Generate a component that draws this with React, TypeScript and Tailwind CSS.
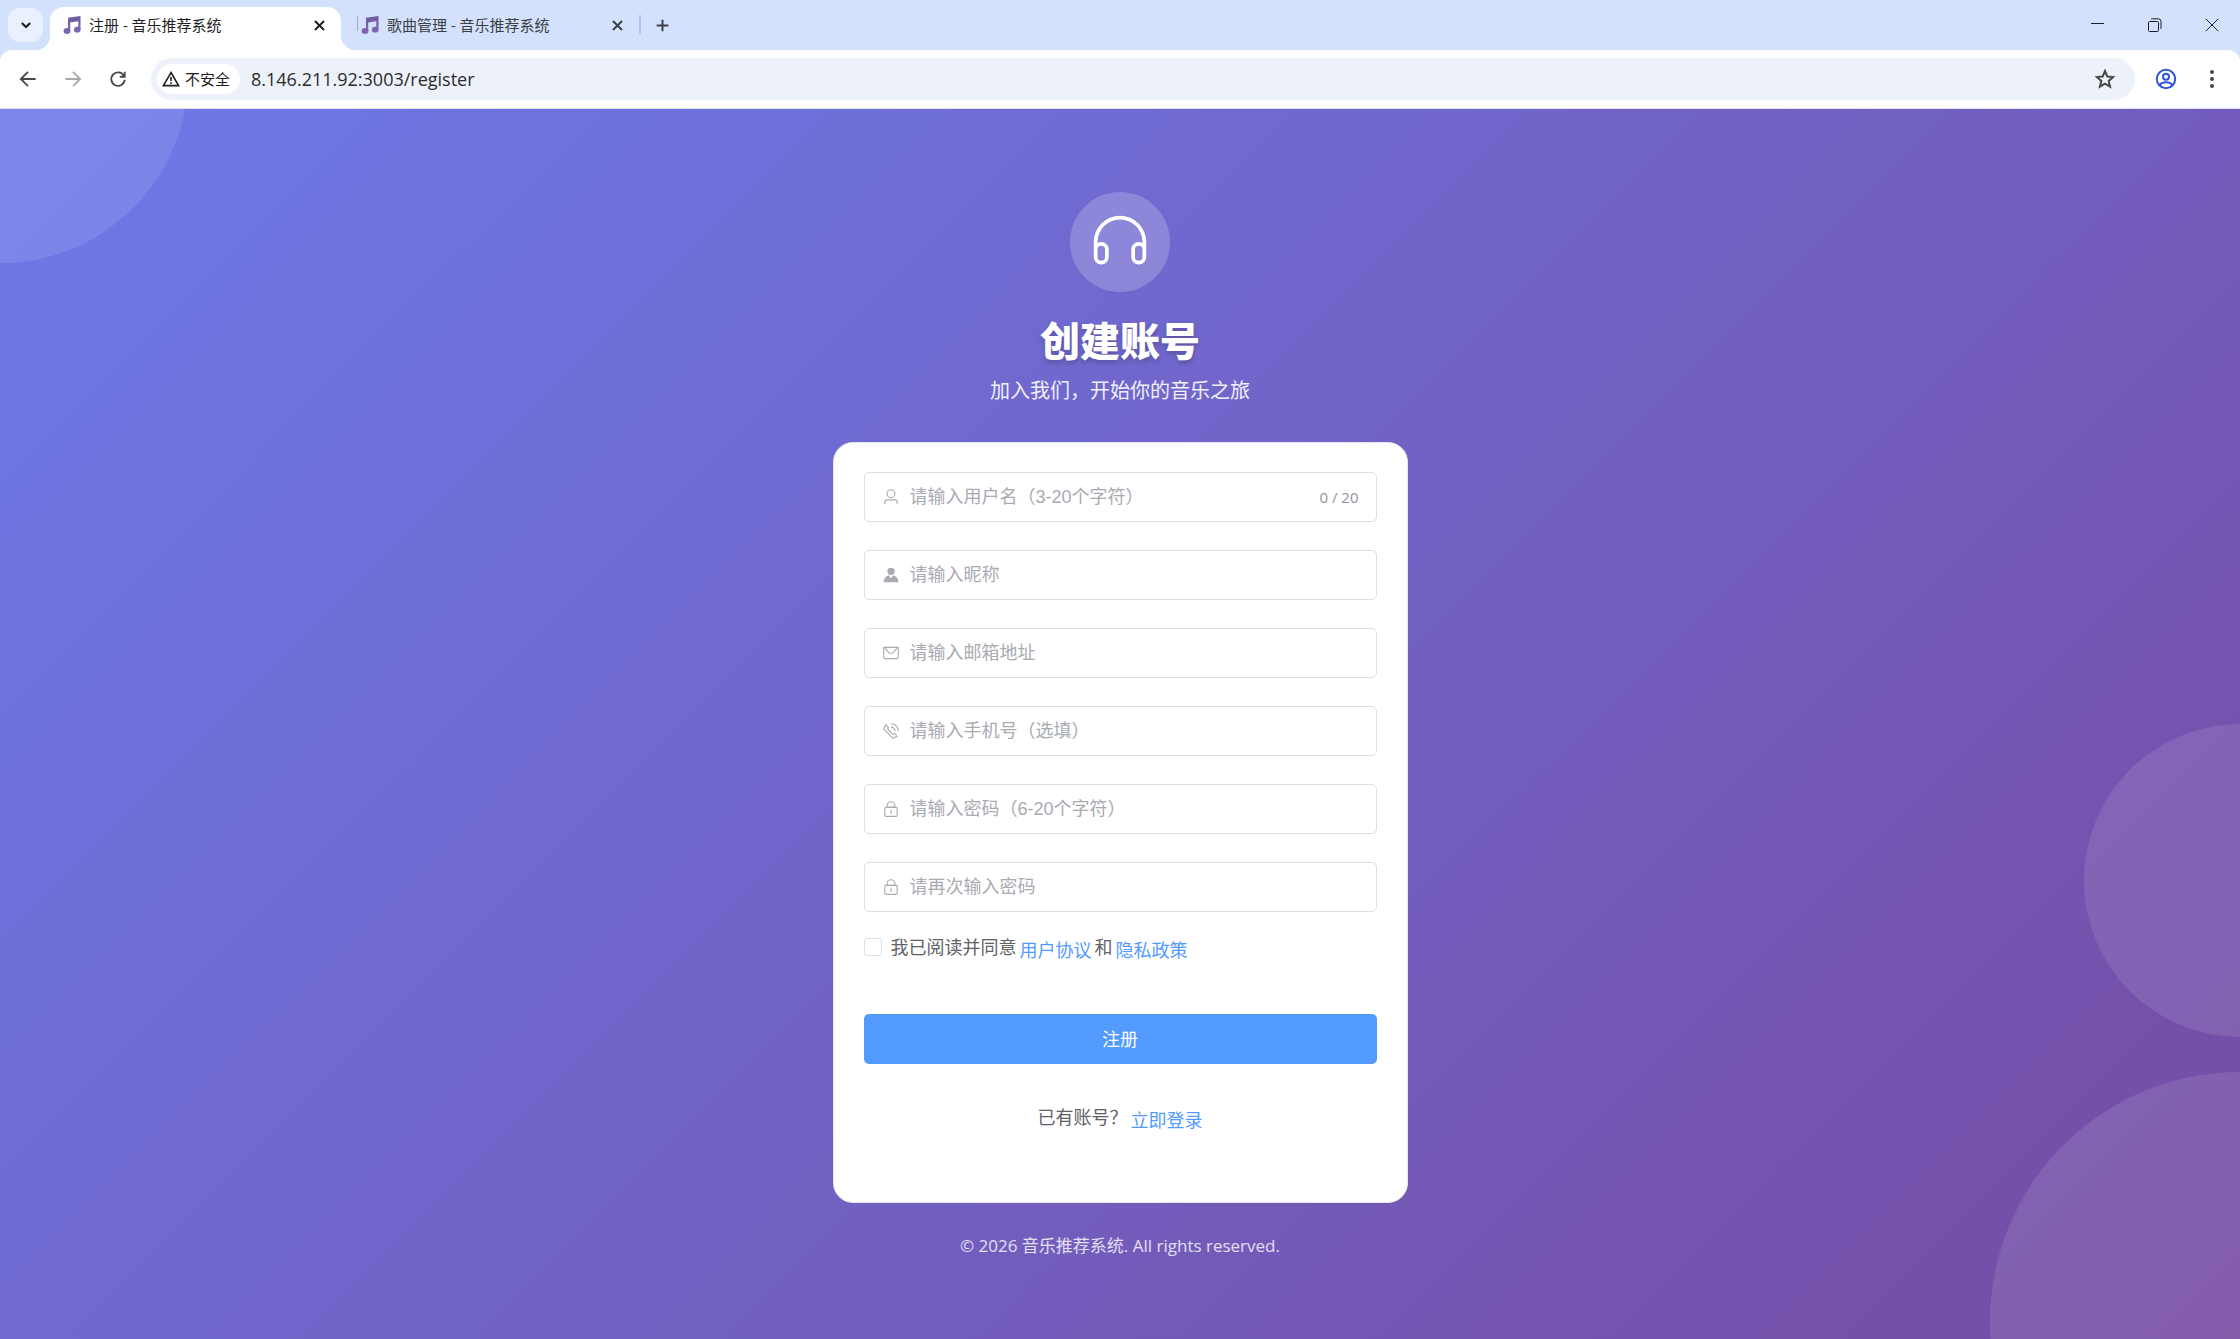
import React, { useState } from 'react';
import { clsx } from 'clsx';

const EL_ICONS = {
  user: [
    'M512 512a192 192 0 1 0 0-384 192 192 0 0 0 0 384m0 64a256 256 0 1 1 0-512 256 256 0 0 1 0 512m320 320v-96a96 96 0 0 0-96-96H288a96 96 0 0 0-96 96v96a32 32 0 1 1-64 0v-96a160 160 0 0 1 160-160h448a160 160 0 0 1 160 160v96a32 32 0 1 1-64 0',
  ],
  avatar: [
    'M628.736 528.896A416 416 0 0 1 928 928H96a415.87 415.87 0 0 1 299.264-399.104L512 704zM720 304a208 208 0 1 1-416 0 208 208 0 0 1 416 0',
  ],
  message: [
    'M128 224v512a64 64 0 0 0 64 64h640a64 64 0 0 0 64-64V224zm0-64h768a64 64 0 0 1 64 64v512a128 128 0 0 1-128 128H192A128 128 0 0 1 64 736V224a64 64 0 0 1 64-64',
    'M904 224 656.512 506.88a192 192 0 0 1-289.024 0L120 224zm-698.944 0 210.56 240.704a128 128 0 0 0 192.704 0L818.944 224z',
  ],
  phone: [
    'M79.36 432.256 591.744 944.64a32 32 0 0 0 35.2 6.784l253.44-108.544a32 32 0 0 0 9.984-52.032l-153.856-153.92a32 32 0 0 0-36.928-6.016l-69.888 34.944L358.08 394.24l35.008-69.888a32 32 0 0 0-5.952-36.928L233.152 133.568a32 32 0 0 0-52.032 10.048L72.512 397.056a32 32 0 0 0 6.784 35.2zm60.48-29.952 81.536-190.08L325.568 316.48l-24.64 49.216-20.608 41.216 32.576 32.64 271.552 271.552 32.64 32.64 41.216-20.672 49.28-24.576 104.192 104.128-190.08 81.472zM512 320v-64a256 256 0 0 1 256 256h-64a192 192 0 0 0-192-192m0-192V64a448 448 0 0 1 448 448h-64a384 384 0 0 0-384-384',
  ],
  lock: [
    'M224 448a32 32 0 0 0-32 32v384a32 32 0 0 0 32 32h576a32 32 0 0 0 32-32V480a32 32 0 0 0-32-32zm0-64h576a96 96 0 0 1 96 96v384a96 96 0 0 1-96 96H224a96 96 0 0 1-96-96V480a96 96 0 0 1 96-96',
    'M512 544a32 32 0 0 1 32 32v192a32 32 0 1 1-64 0V576a32 32 0 0 1 32-32m192-160v-64a192 192 0 1 0-384 0v64zM512 64a256 256 0 0 1 256 256v128H256V320A256 256 0 0 1 512 64',
  ],
  headset: [
    'M896 529.152V512a384 384 0 1 0-768 0v17.152A128 128 0 0 1 320 640v128a128 128 0 1 1-256 0V512a448 448 0 1 1 896 0v256a128 128 0 1 1-256 0V640a128 128 0 0 1 192-110.848M896 640a64 64 0 0 0-128 0v128a64 64 0 0 0 128 0zm-768 0v128a64 64 0 0 0 128 0V640a64 64 0 1 0-128 0',
  ],
};

type IconName = keyof typeof EL_ICONS;

const ElIcon = ({ name, className }: { name: IconName; className?: string }) => (
  <svg viewBox="0 0 1024 1024" fill="currentColor" className={clsx('shrink-0', className)}>
    {EL_ICONS[name].map((d) => (
      <path key={d} d={d} />
    ))}
  </svg>
);

// Stroke icons used by the browser bar
const Line = ({ d, className, width = 2 }: { d: string; className?: string; width?: number }) => (
  <svg viewBox="0 0 20 20" fill="none" stroke="currentColor" strokeWidth={width} className={clsx('shrink-0', className)}>
    <path d={d} />
  </svg>
);

const MusicNote = () => (
  <svg viewBox="0 0 18 18" className="size-[18px] shrink-0">
    <defs>
      <linearGradient id="note" x1="0" y1="0" x2="0" y2="18" gradientUnits="userSpaceOnUse">
        <stop offset="0" stopColor="#6d5c9c" />
        <stop offset="1" stopColor="#7e68b4" />
      </linearGradient>
    </defs>
    <g fill="url(#note)">
      <path d="M5 1.800 17.500 0V14H15.300V5.200L7.200 6.400V15H5z" />
      <ellipse cx="4" cy="15" rx="3.400" ry="3" />
      <ellipse cx="14.200" cy="13.700" rx="3.300" ry="2.900" />
    </g>
  </svg>
);

const Tab = ({ title, active }: { title: string; active?: boolean }) => (
  <div
    className={clsx(
      'relative flex h-[43px] w-[291px] items-center pr-[14px] pb-[7px] pl-[13px]',
      active ? 'rounded-t-[14px] bg-white text-[#1f1f1f]' : 'text-[#3c4043]'
    )}
  >
    {active ? (
      <>
        <span className="absolute bottom-0 -left-[14px] size-[14px] bg-[radial-gradient(circle_at_0_0,transparent_14px,white_14px)]" />
        <span className="absolute -right-[14px] bottom-0 size-[14px] bg-[radial-gradient(circle_at_100%_0,transparent_14px,white_14px)]" />
      </>
    ) : (
      <span className="absolute top-[9px] left-[9px] h-[15px] w-px bg-[#a7a3d6]" />
    )}
    <MusicNote />
    <span className="ml-2 flex-1 truncate text-[15px] leading-5">{title}</span>
    <button aria-label="关闭标签页" className="flex size-4 items-center justify-center">
      <Line d="M3 3 17 17M17 3 3 17" width={3} className="size-[13px]" />
    </button>
  </div>
);

const BrowserBar = () => (
  <header className="border-b border-[#dfe2e6] bg-[#d3e1fd]">
    <div className="flex h-[50px] items-end pl-2">
      <button aria-label="搜索标签页" className="mb-2 flex h-[34px] w-[35px] items-center justify-center rounded-xl bg-[#e9f1fe] text-[#1f1f1f]">
        <Line d="M4 7 10 13 16 7" width={3} className="size-[14px]" />
      </button>
      <div className="ml-[7px] flex gap-[7px]">
        <Tab title="注册 - 音乐推荐系统" active />
        <Tab title="歌曲管理 - 音乐推荐系统" />
      </div>
      <span className="mb-4 h-[19px] w-0.5 bg-[#a8c7fa]" />
      <button aria-label="新标签页" className="mb-4 ml-3 flex size-[18px] items-center justify-center text-[#3c4043]">
        <Line d="M10 1V19M1 10H19" width={3} className="size-[13px]" />
      </button>
      <div className="mb-[18px] ml-auto flex items-center gap-[43px] pr-[21px] text-[#1f1f1f]">
        <button aria-label="最小化">
          <svg viewBox="0 0 14 14" className="size-[14px]" stroke="currentColor">
            <path d="M0 5.500H13" />
          </svg>
        </button>
        <button aria-label="还原">
          <svg viewBox="0 0 14 14" className="size-[14px]" stroke="currentColor" fill="none">
            <rect x=".5" y="3.500" width="10" height="10" rx="1" />
            <path d="M3 1.500Q3.500.8 4.500.8H10.500Q13 .8 13 3.500V9.500Q13 10.500 12.300 11" />
          </svg>
        </button>
        <button aria-label="关闭">
          <svg viewBox="0 0 14 14" className="size-[14px]" stroke="currentColor">
            <path d="M.8 .8 13.200 13.200M13.200 .8 .8 13.200" />
          </svg>
        </button>
      </div>
    </div>
    <div className="flex h-[58px] items-center rounded-t-[12px] bg-white pr-5 pl-[19px] text-[#474747]">
      <div className="flex gap-[27px]">
        <button aria-label="后退">
          <Line d="M18.500 10H2.500M10 2 2 10 10 18" className="size-[18px]" />
        </button>
        <button aria-label="前进" disabled className="text-[#a9a9a9]">
          <Line d="M1.500 10H17.500M10 2 18 10 10 18" className="size-[18px]" />
        </button>
        <button aria-label="重新加载">
          <Line d="M16.500 6.300A7.500 7.500 0 1 0 17.500 11M17.500 2V7.500H12" className="size-[18px]" />
        </button>
      </div>
      <div className="ml-6 flex h-[42px] flex-1 items-center rounded-full bg-[#edf2fa] pr-5 pl-1.5">
        <button className="flex h-[30px] items-center gap-[5px] rounded-full bg-white pr-[10px] pl-[5px] text-[15px] leading-5 text-[#1f1f1f]">
          <svg viewBox="0 0 18 18" className="size-[18px]" fill="none" stroke="currentColor" strokeWidth="1.600">
            <path d="M9 2.500 16.600 15.600H1.400z" />
            <path d="M9 7v4M9 12.300v1.700" />
          </svg>
          不安全
        </button>
        <input
          aria-label="地址"
          defaultValue="8.146.211.92:3003/register"
          className="ml-[11px] min-w-0 flex-1 bg-transparent text-[18px] leading-6 text-[#2b2b2b] outline-none"
        />
        <button aria-label="收藏">
          <Line d="M10 2 12.300 7.500 18.200 8 13.700 11.900 15.100 17.700 10 14.600 4.900 17.700 6.300 11.900 1.800 8 7.700 7.500z" className="size-5" />
        </button>
      </div>
      <div className="ml-5 flex items-center gap-[27px]">
        <button aria-label="用户" className="text-[#2f55d4]">
          <svg viewBox="0 0 22 22" className="size-[22px]" fill="none" stroke="currentColor" strokeWidth="2">
            <circle cx="11" cy="11" r="9.200" />
            <circle cx="11" cy="8.800" r="3" />
            <path d="M4.500 17C6 15.200 8.300 14.300 11 14.300s5 .9 6.500 2.700" />
          </svg>
        </button>
        <button aria-label="菜单">
          <svg viewBox="0 0 16 20" className="h-5 w-4" fill="currentColor">
            <circle cx="8" cy="3" r="2" />
            <circle cx="8" cy="10" r="2" />
            <circle cx="8" cy="17" r="2" />
          </svg>
        </button>
      </div>
    </div>
  </header>
);

const fields: { name: string; icon: IconName; type: string; placeholder: string; max?: number }[] = [
  { name: 'username', icon: 'user', type: 'text', placeholder: '请输入用户名（3-20个字符）', max: 20 },
  { name: 'nickname', icon: 'avatar', type: 'text', placeholder: '请输入昵称' },
  { name: 'email', icon: 'message', type: 'email', placeholder: '请输入邮箱地址' },
  { name: 'phone', icon: 'phone', type: 'tel', placeholder: '请输入手机号（选填）' },
  { name: 'password', icon: 'lock', type: 'password', placeholder: '请输入密码（6-20个字符）' },
  { name: 'confirm', icon: 'lock', type: 'password', placeholder: '请再次输入密码' },
];

const RegisterForm = () => {
  const [form, setForm] = useState<Record<string, string>>({});
  const [agreed, setAgreed] = useState(false);

  return (
    <form
      onSubmit={(e) => e.preventDefault()}
      className="w-full max-w-[575px] rounded-[20px] border border-[#e4e7ed] bg-white px-[30px] pt-[29px] pb-[70px] text-[18px] leading-6 text-[#606266]"
    >
      <div className="flex flex-col gap-7">
        {fields.map((f) => (
          <label
            key={f.name}
            className="flex h-[50px] items-center gap-[10px] rounded-[5px] border border-[#dcdfe6] px-[17px] text-[#a8abb2]"
          >
            <ElIcon name={f.icon} className="size-[18px]" />
            <input
              type={f.type}
              name={f.name}
              maxLength={f.max}
              placeholder={f.placeholder}
              value={form[f.name] || ''}
              onChange={(e) => setForm({ ...form, [f.name]: e.target.value })}
              className="min-w-0 flex-1 font-['Liberation_Sans','Noto_Sans_CJK_SC',sans-serif] text-[#606266] outline-none placeholder:text-[#a8abb2]"
            />
            {f.max && (
              <span className="text-[15px] text-[#909399]">
                {(form[f.name] || '').length} / {f.max}
              </span>
            )}
          </label>
        ))}
      </div>

      <div className="mt-[23px] flex items-start gap-[3px]">
        <label className="flex items-center gap-[9px]">
          <input
            type="checkbox"
            checked={agreed}
            onChange={(e) => setAgreed(e.target.checked)}
            className="size-[18px] appearance-none rounded-[3px] border border-[#dcdfe6] bg-white checked:border-[#539aff] checked:bg-[#539aff]"
          />
          我已阅读并同意
        </label>
        <a href="#terms" className="pt-[3px] text-[#539aff]">用户协议</a>
        <span>和</span>
        <a href="#privacy" className="pt-[3px] text-[#539aff]">隐私政策</a>
      </div>

      <button type="submit" className="mt-[52px] h-[50px] w-full rounded-[5px] bg-[#539aff] text-white">
        注册
      </button>

      <div className="mt-[41px] flex items-start justify-center gap-[3px]">
        <span>已有账号？</span>
        <a href="#login" className="pt-[3px] text-[#539aff]">立即登录</a>
      </div>
    </form>
  );
};

export default function App() {
  return (
    <div className="flex min-h-screen flex-col font-['Open_Sans','Noto_Sans_CJK_SC',sans-serif]">
      <BrowserBar />
      <main className="relative flex flex-1 flex-col items-center overflow-hidden bg-[linear-gradient(135deg,#6c7ae9_0%,#764ba2_100%)] px-5 pt-[83px] pb-[78px]">
        <span className="absolute -top-[221px] -left-[187px] size-[375px] rounded-full bg-white/10" />
        <span className="absolute top-1/2 -right-[157px] size-[313px] rounded-full bg-white/10" />
        <span className="absolute -right-[250px] -bottom-[233px] size-[500px] rounded-full bg-white/10" />

        <div className="relative flex w-full flex-col items-center">
          <div className="flex size-[100px] items-center justify-center rounded-full bg-white/20 text-white">
            <ElIcon name="headset" className="size-[60px]" />
          </div>
          <h1 className="mt-[25px] text-[40px] leading-[48px] font-black text-white [text-shadow:0_3px_5px_rgba(0,0,0,0.2)]">创建账号</h1>
          <p className="mt-[11px] mb-9 text-[20px] leading-[30px] text-white/90">加入我们，开始你的音乐之旅</p>
          <RegisterForm />
          <footer className="mt-[31px] text-[17px] leading-6 text-white/80">© 2026 音乐推荐系统. All rights reserved.</footer>
        </div>
      </main>
    </div>
  );
}
